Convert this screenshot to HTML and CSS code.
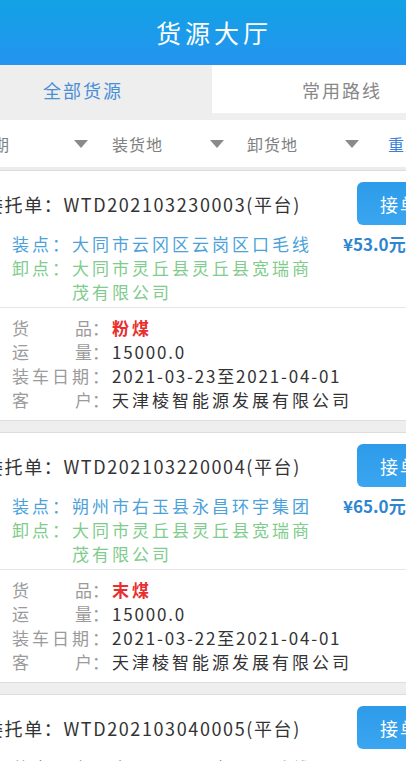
FILE: index.html
```html
<!DOCTYPE html>
<html lang="zh-CN">
<head>
  <meta charset="UTF-8" />
  <meta name="viewport" content="width=device-width, initial-scale=1.0"/>
  <title>货源大厅</title>
  <link rel="stylesheet" href="styles.css">
</head>
<body>
  <div class="screen">
    <!-- 顶部标题 -->
    <header class="topbar">货源大厅</header>

    <!-- 选项卡 -->
    <div class="tabs">
      <div class="tab active">全部货源</div>
      <div class="tab">常用路线</div>
    </div>

    <!-- 筛选条 -->
    <div class="filters">
      <div class="filter"><span class="filter-name">装车日期</span><i class="caret"></i></div>
      <div class="filter"><span class="filter-name">装货地</span><i class="caret"></i></div>
      <div class="filter"><span class="filter-name">卸货地</span><i class="caret"></i></div>
      <div class="reset">重置</div>
    </div>

    <div class="list">
      <div class="card">
        <div class="card-head">
          <div class="order">委托单：WTD202103230003(平台)</div>
          <button class="take-btn">接单</button>
        </div>
        <div class="route-box">
          <div class="routes">
            <div class="route load"><span class="route-label">装点：</span><span class="route-addr">大同市云冈区云岗区口毛线</span></div>
            <div class="route unload"><span class="route-label">卸点：</span><span class="route-addr">大同市灵丘县灵丘县宽瑞商茂有限公司</span></div>
          </div>
          <div class="price">¥53.0元/吨</div>
        </div>
        <div class="details">
          <div class="row"><span class="label spread"><b>货</b><b>品</b></span><span class="colon">：</span><span class="value goods">粉煤</span></div>
          <div class="row"><span class="label spread"><b>运</b><b>量</b></span><span class="colon">：</span><span class="value num">15000.0</span></div>
          <div class="row"><span class="label">装车日期</span><span class="colon">：</span><span class="value num">2021-03-23至2021-04-01</span></div>
          <div class="row"><span class="label spread"><b>客</b><b>户</b></span><span class="colon">：</span><span class="value">天津棱智能源发展有限公司</span></div>
        </div>
      </div>

      <div class="card">
        <div class="card-head">
          <div class="order">委托单：WTD202103220004(平台)</div>
          <button class="take-btn">接单</button>
        </div>
        <div class="route-box">
          <div class="routes">
            <div class="route load"><span class="route-label">装点：</span><span class="route-addr">朔州市右玉县永昌环宇集团</span></div>
            <div class="route unload"><span class="route-label">卸点：</span><span class="route-addr">大同市灵丘县灵丘县宽瑞商茂有限公司</span></div>
          </div>
          <div class="price">¥65.0元/吨</div>
        </div>
        <div class="details">
          <div class="row"><span class="label spread"><b>货</b><b>品</b></span><span class="colon">：</span><span class="value goods">末煤</span></div>
          <div class="row"><span class="label spread"><b>运</b><b>量</b></span><span class="colon">：</span><span class="value num">15000.0</span></div>
          <div class="row"><span class="label">装车日期</span><span class="colon">：</span><span class="value num">2021-03-22至2021-04-01</span></div>
          <div class="row"><span class="label spread"><b>客</b><b>户</b></span><span class="colon">：</span><span class="value">天津棱智能源发展有限公司</span></div>
        </div>
      </div>

      <div class="card">
        <div class="card-head">
          <div class="order">委托单：WTD202103040005(平台)</div>
          <button class="take-btn">接单</button>
        </div>
        <div class="route-box">
          <div class="routes">
            <div class="route load"><span class="route-label">装点：</span><span class="route-addr">大同市云冈区云岗区口毛线</span></div>
            <div class="route unload"><span class="route-label">卸点：</span><span class="route-addr">大同市灵丘县灵丘县宽瑞商茂有限公司</span></div>
          </div>
          <div class="price">¥50.0元/吨</div>
        </div>
      </div>
    </div>
  </div>
</body>
</html>
```

FILE: styles.css
```css
html, body {
  margin: 0;
  padding: 0;
  overflow: hidden;
  background: #eeeeee;
}
body {
  width: 406px;
  font-family: "Noto Sans CJK SC", "Noto Sans", sans-serif;
  color: #333333;
}
.screen {
  width: 504px;
  margin-left: -40px;
}

/* 顶部 */
.topbar {
  height: 65px;
  line-height: 65px;
  text-align: center;
  color: #ffffff;
  font-size: 25px;
  letter-spacing: 4px;
  text-indent: 4px;
  background: linear-gradient(180deg, #12a2e4 0%, #2494f0 100%);
}

/* 选项卡 */
.tabs {
  display: flex;
  height: 55px;
  background: #efefef;
}
.tab {
  flex: 1;
  text-align: center;
  line-height: 50px;
  font-size: 18px;
  letter-spacing: 2px;
  color: #888888;
}
.tab.active {
  color: #4a8fd6;
  background: #eeeeee;
  text-indent: -6px;
}
.tab:not(.active) {
  background: #ffffff;
  height: 48px;
  line-height: 50px;
  text-indent: 8px;
}

/* 筛选 */
.filters {
  display: grid;
  grid-template-columns: 137px 135px 141px auto;
  align-items: center;
  height: 47px;
  padding-left: 15px;
  background: #ffffff;
  border-bottom: 4px solid #ececec;
  font-size: 16px;
  letter-spacing: 1px;
  color: #808080;
}
.filter {
  display: flex;
  align-items: center;
}
.filter:first-child {
  margin-left: -33px;
}
.filter:first-child .filter-name {
  width: 132px;
}
.filter-name {
  width: 98px;
  white-space: nowrap;
}
.caret {
  width: 0;
  height: 0;
  border-left: 7px solid transparent;
  border-right: 7px solid transparent;
  border-top: 8px solid #8a8a8a;
}
.reset {
  color: #3b7fd9;
}

/* 列表 */
.card {
  background: #ffffff;
  padding: 11px 21px 8px 25px;
  border-bottom: 1px solid #dddddd;
  margin-bottom: 12px;
  box-shadow: 0 -1px 0 #dddddd;
}
.card-head {
  display: flex;
  align-items: center;
  height: 43px;
}
.order {
  font-size: 18px;
  letter-spacing: 1.6px;
  color: #333333;
  white-space: nowrap;
}
.take-btn {
  margin-left: auto;
  width: 86px;
  height: 43px;
  border: none;
  border-radius: 6px;
  background: linear-gradient(180deg, #2e9bea, #3aa6f0);
  color: #ffffff;
  font-family: inherit;
  font-size: 18px;
  letter-spacing: 2px;
  padding: 0;
}

.route-box {
  display: flex;
  margin: 7px -21px 0 -25px;
  padding: 0 0 3px 52px;
  border-bottom: 1px solid #e6e6e6;
}
.routes {
  width: 331px;
  flex: none;
}
.route {
  display: flex;
  font-size: 17px;
  line-height: 24px;
  letter-spacing: 3px;
}
.route-label {
  width: 60px;
  flex: none;
}
.route-addr {
  width: 246px;
}
.load { color: #4ba2da; }
.unload { color: #80cc8c; }
.price {
  font-size: 17px;
  line-height: 24px;
  font-weight: bold;
  color: #2f86cf;
  white-space: nowrap;
}

.details {
  margin-left: 27px;
  padding-top: 8px;
}
.row {
  display: flex;
  font-size: 17px;
  line-height: 24px;
  letter-spacing: 3px;
}
.label {
  width: 80px;
  color: #9b9b9b;
  white-space: nowrap;
}
.spread {
  display: flex;
  justify-content: space-between;
}
.spread b {
  font-weight: normal;
}
.spread b:last-child {
  letter-spacing: 0;
}
.colon {
  width: 20px;
  color: #9b9b9b;
}
.value {
  color: #333333;
  white-space: nowrap;
}
.value.num {
  letter-spacing: 1.8px;
}
.goods {
  color: #e8302e;
  font-weight: bold;
}
```
